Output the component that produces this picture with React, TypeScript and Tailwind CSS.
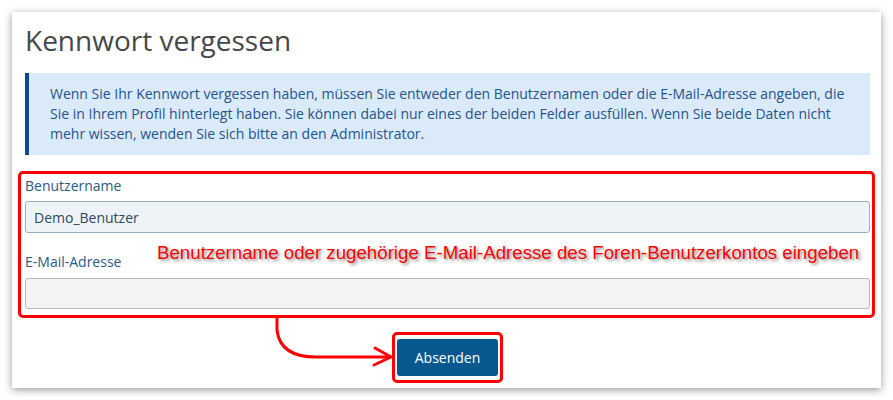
export default function App() {
  return (
    <div className="relative w-[893px] h-[400px] bg-white pt-[12px] pl-[12px]" style={{ fontFamily: '"Open Sans", sans-serif' }}>
      <div className="w-[869px] h-[376px] bg-white shadow-[0_2px_8px_rgba(0,0,0,0.4)] pl-[13px] pr-[11px] pt-[10px]">
        <h1 className="text-[28px] leading-[36px] text-[#474747]">Kennwort vergessen</h1>

        <div className="mt-[15px] border-l-[4px] border-[#0e4a89] bg-[#dbeafa] pl-[21px] pr-[12px] py-[11px] text-[14px] leading-[20px] text-[#24548a]">
          Wenn Sie Ihr Kennwort vergessen haben, müssen Sie entweder den Benutzernamen oder die E-Mail-Adresse angeben, die
          Sie in Ihrem Profil hinterlegt haben. Sie können dabei nur eines der beiden Felder ausfüllen. Wenn Sie beide Daten nicht
          mehr wissen, wenden Sie sich bitte an den Administrator.
        </div>

        <div className="relative mt-[16px] -ml-[7px] -mr-[5px] border-[3px] border-[#ff0000] rounded-[5px] pl-[4px] pr-[2px] pt-[2px] pb-[6px]">
          <label className="block text-[14px] leading-[20px] text-[#2c5a85]">Benutzername</label>
          <div className="mt-[5px] h-[32px] rounded-[3px] border border-[#9cb1c3] bg-[#eef3f8] px-[8px] flex items-center text-[14px] text-[#2b4a66]">
            Demo_Benutzer
          </div>
          <label className="block mt-[19px] text-[14px] leading-[20px] text-[#2c5a85]">E-Mail-Adresse</label>
          <div className="mt-[6px] h-[31px] rounded-[3px] border border-[#b8b8b8] bg-[#f3f3f3]" />
          <div
            className="absolute left-[136px] top-[68px] text-[18.7px] leading-[22px] text-[#ff0000] whitespace-nowrap [text-shadow:2px_2px_3px_rgba(0,0,0,0.45)]"
            style={{ fontFamily: '"Liberation Sans", Arial, sans-serif' }}
          >
            Benutzername oder zugehörige E-Mail-Adresse des Foren-Benutzerkontos eingeben
          </div>
        </div>

        <div className="mt-[14px] ml-[367px] w-[111px] border-[3px] border-[#ff0000] rounded-[5px] px-[2px] py-[4px]">
          <button className="w-[101px] h-[37px] rounded-[3px] bg-[#07588e] text-white text-[14px]">Absenden</button>
        </div>
      </div>

      <svg className="absolute left-0 top-0 pointer-events-none" width="893" height="400" viewBox="0 0 893 400" fill="none">
        <path d="M277 317 L277 330 Q280 357 316 357 L390 357" stroke="#ff0000" strokeWidth="3" strokeLinecap="round" />
        <path d="M375 348 L391 357 L374 365" stroke="#ff0000" strokeWidth="3" strokeLinecap="round" strokeLinejoin="round" />
      </svg>
    </div>
  );
}
